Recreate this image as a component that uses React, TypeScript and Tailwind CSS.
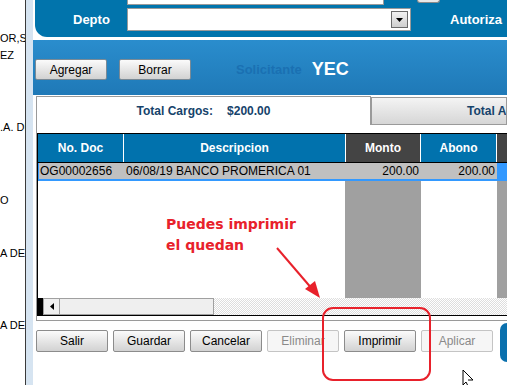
import React from "react";

const leftLines = [
  { text: "OR,SA", mt: "mt-[32px]" },
  { text: "EZ", mt: "mt-[4px]" },
  { text: ".A. DE", mt: "mt-[59px]" },
  { text: "O", mt: "mt-[60px]" },
  { text: "A DE", mt: "mt-[40px]" },
  { text: "A DE", mt: "mt-[59px]" },
];

type Btn = { label: string; disabled?: boolean };

const bottomButtons: Btn[] = [
  { label: "Salir" },
  { label: "Guardar" },
  { label: "Cancelar" },
  { label: "Eliminar", disabled: true },
  { label: "Imprimir" },
  { label: "Aplicar", disabled: true },
];

function WinButton({ label, disabled }: Btn) {
  if (disabled) {
    return (
      <div className="w-[72px] h-[22px] flex items-center justify-center rounded-[2px] border border-[#c4c4c4] bg-[#f6f6f6] text-[12px] text-[#8a8a8a]">
        {label}
      </div>
    );
  }
  return (
    <div className="w-[72px] h-[22px] flex items-center justify-center rounded-[2px] border border-[#8c8c8c] bg-gradient-to-b from-[#fbfbfb] to-[#d2d2d2] text-[12px] text-black">
      {label}
    </div>
  );
}

function App() {
  return (
    <div className="relative w-[507px] h-[385px] flex overflow-hidden bg-white font-['Liberation_Sans',Arial,sans-serif]">
      {/* left strip with clipped text */}
      <div className="w-[25px] shrink-0 overflow-hidden flex flex-col text-[11px] text-black">
        {leftLines.map((l, i) => (
          <div key={i} className={`${l.mt} h-[13px] leading-[13px] whitespace-nowrap`}>
            {l.text}
          </div>
        ))}
      </div>
      <div className="w-px shrink-0 bg-[#3a3a3a]" />
      <div className="w-[7px] shrink-0 bg-[#d6e4f1]" />

      {/* main */}
      <div className="flex-1 flex flex-col min-w-0">
        {/* top dark blue section */}
        <div className="ml-[2px] h-[37px] bg-[#0174ac] rounded-bl-[12px] flex flex-col">
          <div className="h-[5px] flex">
            <div className="ml-[92px] w-[257px] h-[5px] bg-white border-x border-b border-[#9a9a9a]" />
            <div className="ml-[33px] w-[23px] h-[3px] bg-[#e8e8e8] border-x border-b border-[#8a8a8a] rounded-b-[3px]" />
          </div>
          <div className="mt-[3px] h-[23px] flex items-center">
            <div className="w-[92px] pl-[38px] text-[13px] font-bold text-white">Depto</div>
            <div className="w-[284px] h-[23px] bg-white border border-[#9a9a9a] flex items-center justify-end pr-[2px]">
              <div className="w-[17px] h-[17px] border border-[#6a6a6a] bg-gradient-to-b from-[#f2f2f2] to-[#cfcfcf] flex items-center justify-center">
                <svg width="7" height="4" viewBox="0 0 7 4">
                  <path d="M0 0 H7 L3.5 4 Z" fill="#000" />
                </svg>
              </div>
            </div>
            <div className="ml-[39px] text-[13px] font-bold text-white whitespace-nowrap">Autoriza</div>
          </div>
        </div>

        {/* light blue band */}
        <div className="mt-[3px] h-[55px] pt-[4px] bg-gradient-to-b from-[#2a8dcd] to-[#1f79b7] flex items-center">
          <div className="ml-[2px] w-[72px] h-[21px] flex items-center justify-center rounded-[2px] border border-[#7a8a96] bg-gradient-to-b from-[#fbfbfb] to-[#d2d2d2] text-[12px] text-black">
            Agregar
          </div>
          <div className="ml-[12px] w-[72px] h-[21px] flex items-center justify-center rounded-[2px] border border-[#7a8a96] bg-gradient-to-b from-[#fbfbfb] to-[#d2d2d2] text-[12px] text-black">
            Borrar
          </div>
          <div className="ml-[45px] text-[13px] font-bold text-[#1a70b2]">Solicitante</div>
          <div className="ml-[10px] text-[18px] font-bold text-white">YEC</div>
        </div>

        {/* tab panel */}
        <div className="ml-[3px] mt-[1px] flex flex-col">
          <div className="h-[29px] flex">
            <div className="w-[335px] shrink-0 h-[29px] border-t border-x border-[#9a9a9a] bg-white flex items-center justify-center gap-[14px] text-[12px] font-bold text-[#16436b]">
              <span>Total Cargos:</span>
              <span>$200.00</span>
            </div>
            <div className="mt-[1px] flex-1 h-[28px] border border-[#9a9a9a] bg-gradient-to-b from-[#f4f4f4] to-[#d6d6d6] pl-[95px] flex items-center text-[12px] font-bold text-[#16436b] whitespace-nowrap overflow-hidden">
              Total Abonos:
            </div>
          </div>
          <div className="border-l border-b border-[#9a9a9a] pt-[8px] pb-[4px]">
            <div className="border-t border-l border-b border-black flex flex-col">
              {/* header */}
              <div className="h-[29px] flex border-b border-black text-[12px] font-bold text-white">
                <div className="w-[86px] shrink-0 bg-[#0172ad] border-r border-white flex items-center justify-center">No. Doc</div>
                <div className="w-[222px] shrink-0 bg-[#0172ad] border-r border-white flex items-center justify-center">Descripcion</div>
                <div className="w-[75px] shrink-0 bg-[#444444] border-r border-white flex items-center justify-center">Monto</div>
                <div className="w-[76px] shrink-0 bg-[#0172ad] border-r border-white flex items-center justify-center">Abono</div>
                <div className="flex-1 bg-[#444444]" />
              </div>
              {/* selected row */}
              <div className="h-[18px] flex text-[12px] text-black">
                <div className="w-[459px] shrink-0 flex bg-[#c0c0c0] border-l border-b-2 border-[#3399ff]">
                  <div className="w-[85px] pl-[1px] leading-[16px]">OG00002656</div>
                  <div className="w-[222px] pl-[2px] leading-[16px] whitespace-nowrap">06/08/19 BANCO PROMERICA 01</div>
                  <div className="w-[75px] pr-[2px] text-right leading-[16px]">200.00</div>
                  <div className="w-[76px] pr-[2px] text-right leading-[16px]">200.00</div>
                </div>
                <div className="flex-1 bg-[#3399ff]" />
              </div>
              {/* empty body */}
              <div className="h-[117px] flex">
                <div className="w-[307px] shrink-0" />
                <div className="w-[76px] shrink-0 bg-[#a0a0a0]" />
                <div className="w-[76px] shrink-0" />
                <div className="flex-1 bg-[#a0a0a0]" />
              </div>
              {/* horizontal scrollbar */}
              <div className="h-[17px] flex bg-[repeating-conic-gradient(#dedede_0%_25%,#ffffff_0%_50%)] bg-[length:2px_2px]">
                <div className="w-[5px] bg-black" />
                <div className="w-[17px] bg-[#f0f0f0] border border-[#a0a0a0] flex items-center justify-center">
                  <svg width="4" height="7" viewBox="0 0 4 7">
                    <path d="M4 0 V7 L0 3.5 Z" fill="#000" />
                  </svg>
                </div>
                <div className="w-[154px] bg-[#efefef] border border-[#a0a0a0] border-l-0" />
              </div>
            </div>
          </div>
        </div>

        {/* bottom buttons */}
        <div className="mt-[2px] flex items-start">
          <div className="ml-[3px] mt-[7px] flex gap-[5px]">
            {bottomButtons.map((b) => (
              <WinButton key={b.label} {...b} />
            ))}
          </div>
          <div className="ml-auto w-[7px] h-[39px] bg-[#0a70ad] rounded-l-[8px]" />
        </div>
      </div>

      {/* annotation overlay */}
      <div className="absolute left-[166px] top-[214px] text-[14px] leading-[21px] font-bold text-[#e8212b] font-['DejaVu_Sans',Verdana,sans-serif] whitespace-nowrap">
        <div>Puedes imprimir</div>
        <div>el quedan</div>
      </div>
      <svg className="absolute left-0 top-0 pointer-events-none" width="507" height="385" viewBox="0 0 507 385">
        <line x1="277" y1="248" x2="313" y2="290" stroke="#e8212b" strokeWidth="2" />
        <path d="M320 298 L305 289 L315 281 Z" fill="#e8212b" />
        <rect x="323" y="308" width="107" height="72" rx="10" ry="10" fill="none" stroke="#e8212b" strokeWidth="2" />
        <path d="M463 370 L463 385 L466 382 L469 388 M463 370 L473 380 L468 380" fill="#fff" stroke="#000" strokeWidth="1" />
      </svg>
    </div>
  );
}

export default App;
